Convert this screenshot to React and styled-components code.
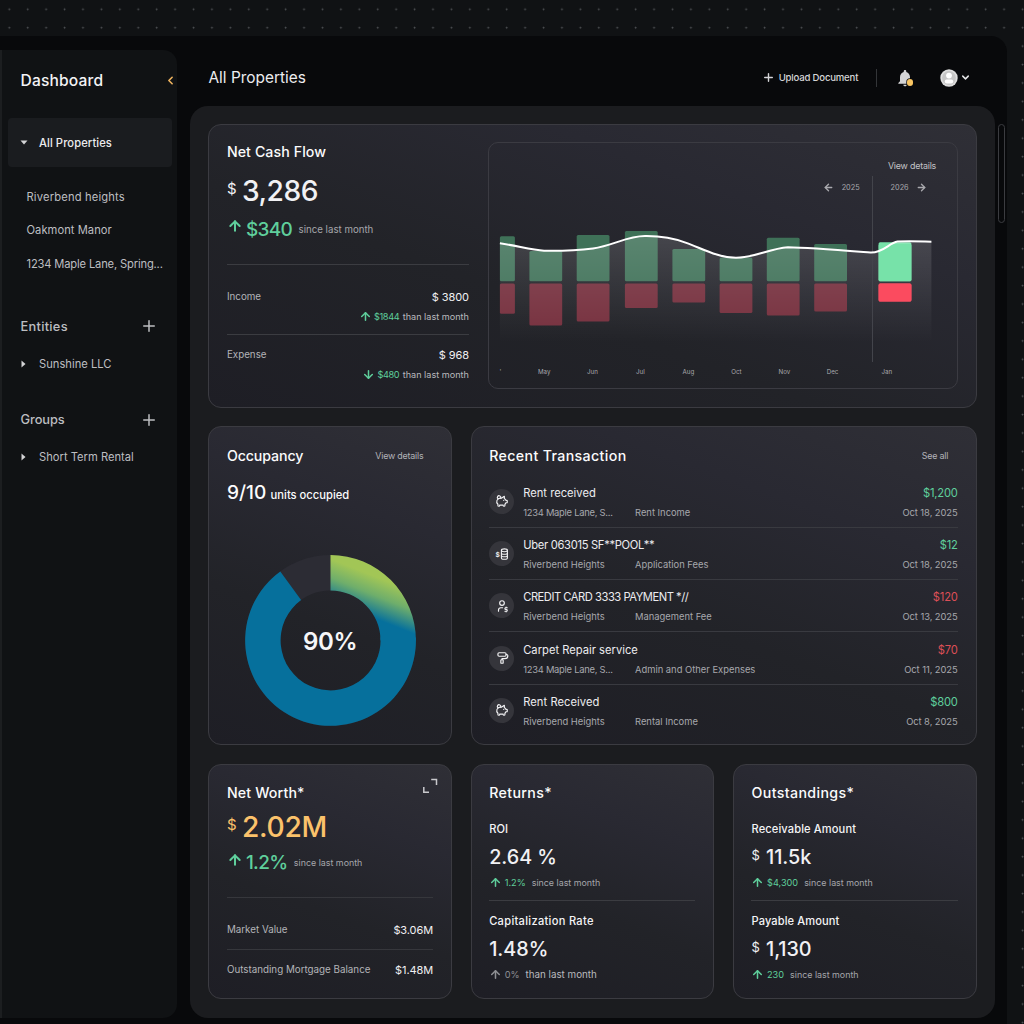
import styled, { createGlobalStyle } from "styled-components"
import { ArrowUp, ArrowDown, ArrowLeft, ArrowRight, ChevronLeft, ChevronDown, Plus } from "lucide-react"
import { TbPigMoney, TbUserDollar, TbPaint } from "react-icons/tb"
import { MdNotifications } from "react-icons/md"

const GREEN = "#5fcf9c"
const RED = "#dc4f57"
const GOLD = "#fbc26b"

const transactions = [
    { icon: "pig", name: "Rent received", place: "1234 Maple Lane, S...", type: "Rent Income", amount: "$1,200", date: "Oct 18, 2025", placeTrack: -0.26 },
    { icon: "coins", name: "Uber 063015 SF**POOL**", place: "Riverbend Heights", type: "Application Fees", amount: "$12", date: "Oct 18, 2025", track: -0.31 },
    { icon: "user", name: "CREDIT CARD 3333 PAYMENT *//", place: "Riverbend Heights", type: "Management Fee", amount: "$120", date: "Oct 13, 2025", track: -0.48, out: true },
    { icon: "paint", name: "Carpet Repair service", place: "1234 Maple Lane, S...", type: "Admin and Other Expenses", amount: "$70", date: "Oct 11, 2025", placeTrack: -0.26, out: true },
    { icon: "pig", name: "Rent Received", place: "Riverbend Heights", type: "Rental Income", amount: "$800", date: "Oct 8, 2025", track: 0.05 },
]

// x, width, top of the income bar, bottom of the expense bar
const bars = [
    { x: 10.9, w: 15, top: 93.2, bottom: 170.8 },
    { x: 40.4, w: 32.8, top: 108, bottom: 182.5 },
    { x: 87.7, w: 32.8, top: 92, bottom: 178.6 },
    { x: 135.9, w: 32.8, top: 88, bottom: 165 },
    { x: 183.4, w: 32.8, top: 106, bottom: 159.4 },
    { x: 230.6, w: 32.8, top: 114.6, bottom: 170 },
    { x: 277.8, w: 32.8, top: 94.8, bottom: 172.6 },
    { x: 325.2, w: 32.8, top: 101.1, bottom: 168.4 },
    { x: 389.6, w: 32.8, top: 99.3, bottom: 158.6, active: true },
]

const months = [
    { x: 11.4, label: "'" },
    { x: 55.2, label: "May" },
    { x: 103.4, label: "Jun" },
    { x: 151.4, label: "Jul" },
    { x: 199.4, label: "Aug" },
    { x: 247.4, label: "Oct" },
    { x: 295.4, label: "Nov" },
    { x: 343.6, label: "Dec" },
    { x: 397.9, label: "Jan" },
]

const LINE = "M10.9 100.3C27 102.6 42 106.6 55 107.8C70 108 92 107 104 105.4C124 102.6 138 93.1 156 93.1C172 92.9 186 95.6 198 100.1C214 106.1 230 114.8 247 114.8C266 114.8 280 105.6 299 104.3C320 104.6 350 107.1 381.5 109.6C394 110.1 400 100.1 408.5 98.6C420 97.8 430 98.4 442.4 98.8"

function CashChart () {
    return (
        <svg width="468" height="245" viewBox="0 0 468 245">
            <defs>
                <linearGradient id="area" x1="0" y1="95" x2="0" y2="200" gradientUnits="userSpaceOnUse">
                    <stop offset="0" stopColor="#fff" stopOpacity="0.14" />
                    <stop offset="1" stopColor="#fff" stopOpacity="0" />
                </linearGradient>
            </defs>
            {bars.map((b) => (
                <g key={b.x}>
                    <rect x={b.x} y={b.top} width={b.w} height={138.2 - b.top} rx="1.5" fill={b.active ? "#77e2a9" : "#3f7158"} />
                    <rect x={b.x} y="140.4" width={b.w} height={b.bottom - 140.4} rx="1.5" fill={b.active ? "#fb4b5f" : "#76303e"} />
                </g>
            ))}
            <path d={`${LINE}V205H10.9Z`} fill="url(#area)" />
            <rect x="389.6" y="101" width="32.8" height="37.2" rx="1.5" fill="#77e2a9" />
            <rect x="389.6" y="140.4" width="32.8" height="18.2" rx="1.5" fill="#fb4b5f" />
            <rect x="383" y="33" width="1" height="186" fill="#43444b" shapeRendering="crispEdges" />
            <path d={LINE} fill="none" stroke="#fff" strokeWidth="2" />
            {months.map((m) => (
                <ChartLabel key={m.label} x={m.x} y="230.5" textAnchor="middle">{m.label}</ChartLabel>
            ))}
        </svg>
    )
}

function Donut () {
    return (
        <svg width="171" height="171" viewBox="-85.5 -85.5 171 171">
            <defs>
                <linearGradient id="ring" x1="20" y1="-73.8" x2="5.6" y2="-37.5" gradientUnits="userSpaceOnUse">
                    <stop offset="0" stopColor="#a2c656" />
                    <stop offset="0.45" stopColor="#6fae6b" />
                    <stop offset="1" stopColor="#06709c" />
                </linearGradient>
            </defs>
            <circle r="67.7" fill="none" stroke="#2c2c34" strokeWidth="35.4" />
            <path d="M85.4 -3A85.4 85.4 0 1 1 -50.2 -69.1L-29.4 -40.5A50 50 0 1 0 50 -3Z" fill="#06709c" />
            <path d="M0 -85.4A85.4 85.4 0 0 1 85.4 0H50A50 50 0 0 0 0 -50Z" fill="url(#ring)" />
            <DonutLabel x="-0.3" y="9" textAnchor="middle">90%</DonutLabel>
        </svg>
    )
}

function CoinsIcon () {
    return (
        <svg width="14" height="14" viewBox="0 0 14 14" fill="none" stroke="currentColor" strokeWidth="1.1">
            <ellipse cx="9.4" cy="3.3" rx="3" ry="1.4" />
            <path d="M6.4 3.3v7.6c0 .8 1.3 1.4 3 1.4s3-.6 3-1.4V3.3" />
            <path d="M6.4 5.9c0 .8 1.3 1.4 3 1.4s3-.6 3-1.4M6.4 8.4c0 .8 1.3 1.4 3 1.4s3-.6 3-1.4" />
            <text x="0.6" y="9.8" fontSize="6.6" fontWeight="700" fontFamily="Inter, sans-serif" fill="currentColor" stroke="none">$</text>
        </svg>
    )
}

function TransactionIcon ({ kind }) {
    if (kind === "coins") return <CoinsIcon />
    if (kind === "user") return <TbUserDollar size={14} />
    if (kind === "paint") return <TbPaint size={14} />
    return <TbPigMoney size={14} />
}

function Avatar () {
    return (
        <svg width="18" height="18" viewBox="0 0 18 18">
            <circle cx="9" cy="9" r="8.7" fill="#dedede" />
            <circle cx="9" cy="9" r="6.9" fill="#c6c6c6" />
            <circle cx="9" cy="6.6" r="2.9" fill="#fff" />
            <rect x="4.8" y="10.6" width="8.4" height="3.9" rx="1.9" fill="#fff" />
        </svg>
    )
}

function Change ({ value, note, down, color = GREEN, gap, noteSize, bright }) {
    return (
        <ChangeRow>
            {down ? <ArrowDown size={13} strokeWidth={2.8} color={color} /> : <ArrowUp size={13} strokeWidth={2.8} color={color} />}
            <ChangeValue $color={color} $gap={gap}>{value}</ChangeValue>
            <Note $bright={bright} $size={noteSize}>{note}</Note>
        </ChangeRow>
    )
}

export default function App () {
    return (
        <Page>
            <GlobalStyle />
            <Window>
                <Sidebar>
                    <SidebarHead>
                        <h1>Dashboard</h1>
                        <ChevronLeft size={13} strokeWidth={3} color="#eeb35f" />
                    </SidebarHead>
                    <Selected>
                        <svg width="8" height="5" viewBox="0 0 8 5"><path d="M0.5 0.5h7L4 4.5Z" fill="#d4d4d6" /></svg>
                        All Properties
                    </Selected>
                    <Places>
                        <li>Riverbend heights</li>
                        <li>Oakmont Manor</li>
                        <li>1234 Maple Lane, Spring...</li>
                    </Places>
                    <Group>
                        <GroupHead>Entities <Plus size={18} strokeWidth={2} /></GroupHead>
                        <GroupItem>
                            <svg width="5" height="8" viewBox="0 0 5 8"><path d="M0.5 0.5v7L4.5 4Z" fill="#d4d4d6" /></svg>
                            Sunshine LLC
                        </GroupItem>
                    </Group>
                    <Group>
                        <GroupHead $track={-0.05}>Groups <Plus size={18} strokeWidth={2} /></GroupHead>
                        <GroupItem>
                            <svg width="5" height="8" viewBox="0 0 5 8"><path d="M0.5 0.5v7L4.5 4Z" fill="#d4d4d6" /></svg>
                            Short Term Rental
                        </GroupItem>
                    </Group>
                </Sidebar>
                <Main>
                    <Topbar>
                        <h2>All Properties</h2>
                        <Upload><Plus size={13} strokeWidth={2.6} />Upload Document</Upload>
                        <Separator />
                        <Bell>
                            <MdNotifications size={20} />
                            <i />
                        </Bell>
                        <Profile>
                            <Avatar />
                            <ChevronDown size={11} strokeWidth={3.2} />
                        </Profile>
                    </Topbar>
                    <Body>
                        <Panel>
                            <Card $height={284}>
                                <CashRow>
                                    <CashInfo>
                                        <CardTitle $track={0.08}>Net Cash Flow</CardTitle>
                                        <Headline $top={10.4}>
                                            <sup>$</sup>
                                            <b>3,286</b>
                                        </Headline>
                                        <Growth $top={8.6}>
                                            <ArrowUp size={16} strokeWidth={3} />
                                            <b>$340</b>
                                            <Note $size={9.7}>since last month</Note>
                                        </Growth>
                                        <Rule $top={22.5} />
                                        <Flow $top={20.8}>
                                            <Pair><Label>Income</Label><Amount>$ 3800</Amount></Pair>
                                            <Change value="$1844" note="than last month" gap={3.5} bright />
                                        </Flow>
                                        <Rule $top={8.2} />
                                        <Flow $top={9}>
                                            <Pair><Label>Expense</Label><Amount>$ 968</Amount></Pair>
                                            <Change value="$480" note="than last month" gap={3.5} down bright />
                                        </Flow>
                                    </CashInfo>
                                    <ChartBox>
                                        <CashChart />
                                        <ChartNav>
                                            <span>View details</span>
                                            <div>
                                                <ArrowLeft size={11} strokeWidth={3} />
                                                <em>2025</em>
                                                <em>2026</em>
                                                <ArrowRight size={11} strokeWidth={3} />
                                            </div>
                                        </ChartNav>
                                    </ChartBox>
                                </CashRow>
                            </Card>
                            <Columns>
                                <Card $height={319}>
                                    <CardHead $top={0.6} $end={27.5}>
                                        <CardTitle $track={-0.1}>Occupancy</CardTitle>
                                        <Link>View details</Link>
                                    </CardHead>
                                    <Units><b>9/10</b> units occupied</Units>
                                    <DonutBox><Donut /></DonutBox>
                                </Card>
                                <Card $height={319} $span={2}>
                                    <CardHead $top={0.6} $end={27.5}>
                                        <CardTitle $track={0.36}>Recent Transaction</CardTitle>
                                        <Link>See all</Link>
                                    </CardHead>
                                    <List>
                                        {transactions.map((t, i) => (
                                            <Item key={i}>
                                                <Badge><TransactionIcon kind={t.icon} /></Badge>
                                                <ItemText $track={t.track} $placeTrack={t.placeTrack}>
                                                    <h4>{t.name}</h4>
                                                    <p><span>{t.place}</span>{t.type}</p>
                                                </ItemText>
                                                <ItemEnd $out={t.out}>
                                                    <h4>{t.amount}</h4>
                                                    <p>{t.date}</p>
                                                </ItemEnd>
                                            </Item>
                                        ))}
                                    </List>
                                </Card>
                            </Columns>
                            <Columns>
                                <Card $height={235}>
                                    <CardHead $end={13.5}>
                                        <CardTitle $track={0.15}>Net Worth*</CardTitle>
                                        <Expand width="16" height="16" viewBox="0 0 16 16" fill="none" stroke="#c9c9cd" strokeWidth="1.5">
                                            <path d="M9.2 1.6H14.5V7M1.8 9V14.3H7" />
                                        </Expand>
                                    </CardHead>
                                    <Headline $gold $top={6.8}>
                                        <sup>$</sup>
                                        <b>2.02M</b>
                                    </Headline>
                                    <Growth $top={5.4}>
                                        <ArrowUp size={16} strokeWidth={3} />
                                        <b>1.2%</b>
                                        <Note $size={8.9}>since last month</Note>
                                    </Growth>
                                    <Worth>
                                        <Pair><Label>Market Value</Label><Amount>$3.06M</Amount></Pair>
                                        <Pair><Label>Outstanding Mortgage Balance</Label><Amount>$1.48M</Amount></Pair>
                                    </Worth>
                                </Card>
                                <Card $height={235}>
                                    <CardTitle $track={0.36}>Returns*</CardTitle>
                                    <Metric>
                                        <h4>ROI</h4>
                                        <MetricValue>2.64 %</MetricValue>
                                        <Change value="1.2%" note="since last month" noteSize={8.9} />
                                    </Metric>
                                    <Metric $ruled $track={0.3}>
                                        <h4>Capitalization Rate</h4>
                                        <MetricValue>1.48%</MetricValue>
                                        <Change value="0%" note="than last month" color="#8f9094" noteSize={9.8} bright />
                                    </Metric>
                                </Card>
                                <Card $height={235}>
                                    <CardTitle $track={0.37}>Outstandings*</CardTitle>
                                    <Metric $track={0.12}>
                                        <h4>Receivable Amount</h4>
                                        <MetricValue><sup>$</sup>11.5k</MetricValue>
                                        <Change value="$4,300" note="since last month" noteSize={8.9} />
                                    </Metric>
                                    <Metric $ruled $track={0.1}>
                                        <h4>Payable Amount</h4>
                                        <MetricValue><sup>$</sup>1,130</MetricValue>
                                        <Change value="230" note="since last month" noteSize={8.9} />
                                    </Metric>
                                </Card>
                            </Columns>
                        </Panel>
                        <Scrollbar />
                    </Body>
                </Main>
            </Window>
        </Page>
    )
}

const GlobalStyle = createGlobalStyle`
    * {
        box-sizing: border-box;
        margin: 0;
        padding: 0;
    }
    body {
        background: #101214;
        font-family: 'Inter', 'Liberation Sans', sans-serif;
        overflow: hidden;
    }
    svg {
        display: block;
        flex-shrink: 0;
    }
    ul {
        list-style: none;
    }
`

const Page = styled.div`
    width: 1024px;
    height: 1024px;
    padding-top: 36px;
    overflow: hidden;
    background-color: #101214;
    background-image: radial-gradient(circle at 9.3px 9.3px, #505356 0.5px, transparent 1.3px);
    background-size: 18.43px 18.43px;
    color: #f1f1f4;
`

const Window = styled.div`
    display: flex;
    width: 1007px;
    height: 1000px;
    padding-top: 13.5px;
    background: #08090b;
    border-top-right-radius: 16px;
`

const Sidebar = styled.aside`
    width: 177px;
    height: 968px;
    border-left: 2px solid #1c1e20;
    background: #101214;
    border-radius: 0 14px 14px 0;
    padding-left: 6px;
    color: #bdbec1;
`

const SidebarHead = styled.div`
    display: flex;
    align-items: center;
    height: 61px;
    padding: 0 0 0 12.5px;
    h1 {
        width: 146px;
        font-weight: 500;
        font-size: 15.6px;
        letter-spacing: 0.15px;
        color: #f3f3f5;
    }
    svg {
        margin-left: -3px;
    }
`

const Selected = styled.div`
    display: flex;
    align-items: center;
    gap: 11.5px;
    width: 163.5px;
    height: 49px;
    margin-top: 7.5px;
    padding-left: 11.5px;
    background: #1a1c1f;
    border-radius: 4px;
    font-weight: 500;
    font-size: 11.2px;
    letter-spacing: 0.08px;
    color: #ececee;
`

const Places = styled.ul`
    margin-top: 14px;
    padding-left: 18.5px;
    li {
        height: 33.4px;
        line-height: 33.4px;
        font-weight: 400;
        font-size: 11.2px;
        letter-spacing: 0.16px;
        white-space: nowrap;
    }
    li:nth-child(2) {
        letter-spacing: 0.04px;
    }
    li:nth-child(3) {
        letter-spacing: -0.17px;
    }
`

const Group = styled.section`
    margin-top: 32.2px;
    height: 61px;
    &:first-of-type {
        margin-top: 35.3px;
    }
`

const GroupHead = styled.div`
    display: flex;
    align-items: center;
    justify-content: space-between;
    height: 20px;
    padding: 0 19px 0 12.5px;
    font-weight: 500;
    font-size: 12.8px;
    letter-spacing: ${(p) => p.$track || 0.3}px;
`

const GroupItem = styled.div`
    display: flex;
    align-items: center;
    gap: 13px;
    height: 20px;
    margin-top: 17.5px;
    padding-left: 13px;
    font-size: 11.2px;
`

const Main = styled.main`
    flex: 1;
    padding-left: 13px;
`

const Topbar = styled.header`
    display: flex;
    align-items: center;
    height: 56px;
    padding: 0 36px 0 18.5px;
    h2 {
        flex: 1;
        font-weight: 400;
        font-size: 15.4px;
        color: #ededef;
    }
`

const Upload = styled.div`
    display: flex;
    align-items: center;
    gap: 3.5px;
    font-weight: 500;
    font-size: 9.6px;
    letter-spacing: -0.2px;
    color: #d5d5d8;
`

const Separator = styled.div`
    width: 1px;
    height: 18px;
    margin: 0 17.5px 0 18px;
    background: #333538;
`

const Bell = styled.div`
    position: relative;
    color: #d5d5d7;
    i {
        position: absolute;
        right: 1.8px;
        bottom: 2px;
        width: 6.4px;
        height: 6.4px;
        border-radius: 50%;
        background: #f9c563;
        box-shadow: 0 0 0 0.7px #08090b;
    }
`

const Profile = styled.div`
    display: flex;
    align-items: center;
    gap: 2.5px;
    margin-left: 24.8px;
    color: #e6e6e8;
`

const Body = styled.div`
    display: flex;
    align-items: flex-start;
    gap: 3px;
`

const Panel = styled.div`
    display: flex;
    flex-direction: column;
    gap: 18.7px;
    width: 805px;
    height: 912px;
    padding: 18.2px 18.4px;
    background: #1b1c1f;
    border-radius: 18px;
`

const Scrollbar = styled.div`
    width: 6.6px;
    height: 99px;
    margin-top: 18px;
    border: 1px solid #3b3c40;
    border-radius: 4px;
`

const Columns = styled.div`
    display: grid;
    grid-template-columns: repeat(3, 1fr);
    gap: 18.7px;
`

const Card = styled.section`
    grid-column: span ${(p) => p.$span || 1};
    height: ${(p) => p.$height}px;
    padding: 17.6px 18px 0 17.5px;
    border: 1px solid #3b3b41;
    border-radius: 13px;
    background: linear-gradient(200deg, #2f2f36 0%, #292932 28%, #222328 60%, #1e1e25 100%);
`

const CardHead = styled.div`
    display: flex;
    justify-content: space-between;
    padding-top: ${(p) => p.$top || 0}px;
    padding-right: ${(p) => p.$end - 18}px;
    margin-right: ${(p) => (p.$end < 18 ? p.$end - 18 : 0)}px;
`

const CardTitle = styled.h3`
    height: 20px;
    line-height: 20px;
    font-weight: 500;
    font-size: 14.2px;
    letter-spacing: ${(p) => p.$track || 0}px;
    white-space: nowrap;
    color: #fbfbfc;
`

const Link = styled.span`
    line-height: 20px;
    font-size: 8.9px;
    letter-spacing: -0.2px;
    color: #b2b3b8;
`

const Expand = styled.svg`
    margin: -5px 0 0 0;
`

const CashRow = styled.div`
    display: flex;
    justify-content: space-between;
`

const CashInfo = styled.div`
    width: 242px;
`

const Headline = styled.div`
    display: flex;
    align-items: center;
    gap: 5.5px;
    height: 36px;
    margin-top: ${(p) => p.$top}px;
    color: ${(p) => (p.$gold ? GOLD : "#f1f1f4")};
    sup {
        height: 24px;
        line-height: 19px;
        font-size: 15px;
    }
    b {
        font-weight: 500;
        font-size: 28.2px;
        line-height: 36px;
        letter-spacing: ${(p) => (p.$gold ? -0.3 : -0.5)}px;
    }
`

const Growth = styled.div`
    display: flex;
    align-items: center;
    height: 24px;
    margin-top: ${(p) => p.$top}px;
    color: ${GREEN};
    svg {
        margin: -6px 3px 0 0;
    }
    b {
        margin-right: 6.5px;
        font-weight: 500;
        font-size: 19px;
        line-height: 25px;
        letter-spacing: -0.7px;
    }
`

const Note = styled.span`
    font-size: ${(p) => p.$size || 9.1}px;
    color: ${(p) => (p.$bright ? "#b9babe" : "#a5a6ab")};
    white-space: nowrap;
`

const Rule = styled.div`
    height: 1px;
    margin-top: ${(p) => p.$top}px;
    background: #3b3c41;
`

const Flow = styled.div`
    display: flex;
    flex-direction: column;
    margin-top: ${(p) => p.$top}px;
    & > div:last-child {
        align-self: flex-end;
    }
`

const Pair = styled.div`
    display: flex;
    align-items: center;
    justify-content: space-between;
    height: 22px;
`

const Label = styled.span`
    font-size: 9.8px;
    color: #b3b4b8;
`

const Amount = styled.span`
    padding-top: 1px;
    font-size: 11px;
    letter-spacing: -0.1px;
    color: #f0f0f2;
`

const ChangeRow = styled.div`
    display: flex;
    align-items: center;
    height: 18px;
`

const ChangeValue = styled.span`
    margin: 0 ${(p) => p.$gap || 6}px 0 2.5px;
    font-size: 9.2px;
    letter-spacing: ${(p) => (p.$gap ? -0.4 : 0)}px;
    color: ${(p) => p.$color};
`

const ChartBox = styled.div`
    position: relative;
    width: 470px;
    height: 246.5px;
    border: 1px solid #3b3b42;
    border-radius: 10px;
`

const ChartNav = styled.div`
    position: absolute;
    top: 15.5px;
    right: 20.5px;
    display: flex;
    flex-direction: column;
    align-items: flex-end;
    color: #c3c3c7;
    span {
        font-size: 8.9px;
        letter-spacing: -0.2px;
        line-height: 14px;
    }
    div {
        display: flex;
        align-items: center;
        height: 14px;
        margin: 7.5px 9px 0 0;
        color: #a9a9ae;
    }
    em {
        margin-left: 8px;
        font-style: normal;
        font-size: 7.3px;
    }
    em + em {
        margin: 0 7.5px 0 31px;
    }
`

const ChartLabel = styled.text`
    font-family: 'Inter', sans-serif;
    font-size: 6.2px;
    fill: #a9a9ae;
`

const DonutLabel = styled.text`
    font-family: 'Inter', sans-serif;
    font-weight: 600;
    font-size: 24px;
    letter-spacing: -0.3px;
    fill: #f6f6f8;
`

const Units = styled.p`
    margin-top: 14px;
    line-height: 24px;
    font-weight: 500;
    font-size: 11.2px;
    color: #fbfbfc;
    b {
        margin-right: 1.4px;
        font-weight: 500;
        font-size: 19.1px;
    }
`

const DonutBox = styled.div`
    display: flex;
    justify-content: center;
    margin: 48.8px 0 0 0.6px;
`

const List = styled.ul`
    margin-top: 10.1px;
`

const Item = styled.li`
    display: flex;
    height: 52.25px;
    padding-top: 7.2px;
    border-bottom: 1px solid #393a40;
    &:last-child {
        border: none;
    }
    h4 {
        height: 20px;
        line-height: 20px;
        font-weight: 400;
        font-size: 11.2px;
        color: #ececef;
    }
    p {
        line-height: 20px;
        font-size: 9.4px;
        color: #a7a8ad;
    }
`

const Badge = styled.div`
    display: flex;
    align-items: center;
    justify-content: center;
    width: 25px;
    height: 25px;
    margin: 6px 9px 0 0;
    border-radius: 50%;
    background: #35353b;
    color: #f2f2f4;
`

const ItemText = styled.div`
    flex: 1;
    h4 {
        letter-spacing: ${(p) => p.$track || 0}px;
    }
    p span {
        display: inline-block;
        width: 111.8px;
        letter-spacing: ${(p) => p.$placeTrack || 0}px;
    }
`

const ItemEnd = styled.div`
    text-align: right;
    h4 {
        letter-spacing: -0.2px;
        color: ${(p) => (p.$out ? RED : GREEN)};
    }
    p {
        letter-spacing: -0.07px;
    }
`

const Worth = styled.div`
    margin-top: 22.4px;
    border-top: 1px solid #36373c;
    padding-top: 12px;
    & > div {
        height: 39.8px;
    }
    & > div:first-child {
        border-bottom: 1px solid #36373c;
    }
`

const Metric = styled.div`
    margin-top: ${(p) => (p.$ruled ? 8.6 : 16)}px;
    padding-top: ${(p) => (p.$ruled ? 10 : 0)}px;
    border-top: ${(p) => (p.$ruled ? "1px solid #3b3c41" : "none")};
    h4 {
        height: 20px;
        line-height: 20px;
        font-weight: 500;
        font-size: 11.1px;
        letter-spacing: ${(p) => p.$track || 0}px;
        color: #f4f4f6;
    }
`

const MetricValue = styled.div`
    display: flex;
    height: 34.6px;
    line-height: 36px;
    font-weight: 500;
    font-size: 19.8px;
    letter-spacing: -0.05px;
    sup {
        width: 14.5px;
        line-height: 33px;
        font-weight: 400;
        font-size: 13px;
    }
`
